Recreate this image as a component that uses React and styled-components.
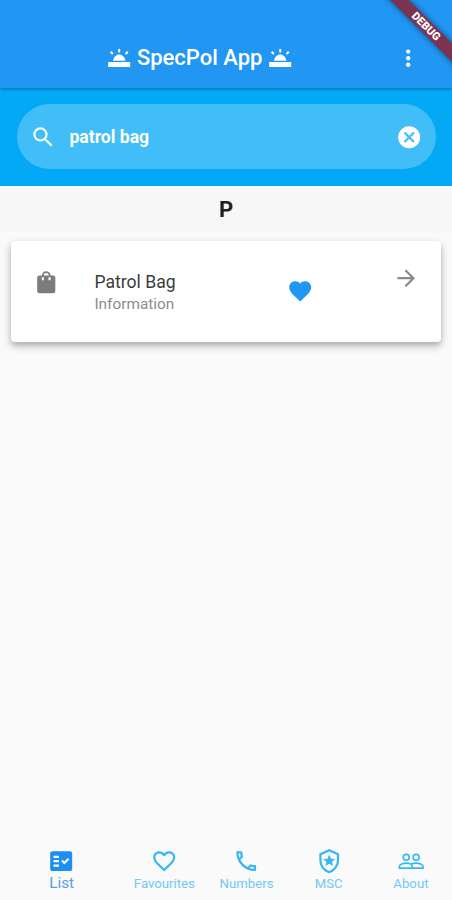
import styled, { createGlobalStyle } from "styled-components"
import {
    MdMoreVert,
    MdSearch,
    MdCancel,
    MdArrowForward,
    MdFavorite,
    MdFavoriteBorder,
    MdFactCheck,
    MdOutlineCall,
    MdOutlineLocalPolice,
} from "react-icons/md"

const GlobalStyle = createGlobalStyle`
    * {
        box-sizing: border-box;
    }

    body {
        margin: 0;
        font-family: Roboto, "Liberation Sans", sans-serif;
        background-color: #FAFAFA;
    }
`

const Screen = styled.div`
    background-color: #FAFAFA;
    display: flex;
    flex-direction: column;
    height: 900px;
    overflow: hidden;
    position: relative;
    width: 452px;
`

const AppBar = styled.header`
    align-items: center;
    background-color: #2196F3;
    box-shadow: 0 1px 3px rgba(0, 0, 0, 0.35);
    color: #FFF;
    display: flex;
    flex-shrink: 0;
    height: 88px;
    padding: 28px 31px 0 105.5px;
    position: relative;
    z-index: 1;
`

const Title = styled.h1`
    align-items: center;
    display: flex;
    flex: 1;
    font-size: 22px;
    font-weight: 500;
    gap: 5px;
    line-height: 26px;
    margin: 0;
    white-space: nowrap;
`

const MenuButton = styled.button`
    background: none;
    border: none;
    color: inherit;
    display: flex;
    padding: 0;
`

const SearchArea = styled.div`
    background-color: #03A9F4;
    flex-shrink: 0;
    height: 98px;
    padding: 16px 16px 17px 17px;
`

const SearchBox = styled.div`
    align-items: center;
    background-color: #41BEF8;
    border-radius: 33px;
    color: #FFF;
    display: flex;
    height: 65px;
    padding: 1px 14px 0 13px;
`

const SearchText = styled.span`
    flex: 1;
    font-size: 17.6px;
    font-weight: 700;
    line-height: 22px;
    margin: 0 0 1px 13px;
`

const Letter = styled.h2`
    background-color: #F7F7F7;
    color: #212121;
    flex-shrink: 0;
    font-size: 22px;
    font-weight: 700;
    height: 45px;
    line-height: 47px;
    margin: 0;
    text-align: center;
`

const Card = styled.article`
    background-color: #FFF;
    border-radius: 4px;
    box-shadow: 0 4px 10px rgba(0, 0, 0, 0.22), 0 3px 5px rgba(0, 0, 0, 0.14);
    display: flex;
    flex-shrink: 0;
    height: 101px;
    margin: 10px 11px 0;
    padding: 24px 22px 0;
`

const CardIcon = styled.span`
    color: ${(props) => props.$color};
    display: flex;
    height: 27px;
    margin-top: ${(props) => props.$top || "0"};
`

const CardText = styled.div`
    flex: 1;
    margin-left: 35px;
`

const CardTitle = styled.h3`
    color: #3C3C3C;
    font-size: 17.6px;
    font-weight: 400;
    line-height: 22px;
    margin: 6px 0 0;
`

const CardSubtitle = styled.p`
    color: #8C8C8C;
    font-size: 15.4px;
    line-height: 18px;
    margin: 2px 0 0;
`

const HeartSlot = styled.div`
    width: 105.4px;
`

const NavBar = styled.nav`
    background-color: #FAFAFA;
    border-top: 1px solid #F7F7F7;
    display: flex;
    flex-shrink: 0;
    height: 63px;
    margin-top: auto;
`

const NavItem = styled.a`
    align-items: center;
    color: ${(props) => (props.$active ? "#1C8FF0" : "#36B8F6")};
    display: flex;
    flex: ${(props) => (props.$active ? 1.5 : 1)} 1 0;
    flex-direction: column;
    padding-top: 10px;
`

const NavLabel = styled.span`
    color: ${(props) => (props.$active ? "#5A9EE8" : "#73C8F5")};
    font-size: ${(props) => (props.$active ? "15.4px" : "13.2px")};
    line-height: 18px;
    margin-top: ${(props) => (props.$active ? "0" : "1px")};
`

const BannerCorner = styled.div`
    height: 80px;
    overflow: hidden;
    pointer-events: none;
    position: absolute;
    right: 0;
    top: 0;
    width: 80px;
    z-index: 2;
`

const Banner = styled.div`
    background-color: #7C3350;
    box-shadow: 0 0 6px rgba(0, 0, 0, 0.5);
    color: #FFF;
    font-size: 11px;
    font-weight: 900;
    height: 13px;
    line-height: 13px;
    position: absolute;
    right: -34px;
    text-align: center;
    top: 20px;
    transform: rotate(45deg);
    width: 120px;
`

const ICON = 26.4

const tabs = [
    { label: "List", Icon: MdFactCheck, active: true },
    { label: "Favourites", Icon: MdFavoriteBorder },
    { label: "Numbers", Icon: MdOutlineCall },
    { label: "MSC", Icon: MdOutlineLocalPolice },
    { label: "About", Icon: PeopleIcon },
]

// rising light on a solid base, used on both sides of the title
function BeaconIcon() {
    return (
        <svg width={ICON} height={ICON} viewBox="0 0 24 24" fill="currentColor">
            <path d="M2 15.5h20V20H2z" />
            <path d="M6.3 14.4C7 10.8 9.3 8.6 12 8.6s5 2.2 5.700 5.800z" />
            <path d="M11.1 3.600h1.800v3.200h-1.800z" />
            <path
                d="M4.200 6.200l2 2M19.800 6.200l-2 2"
                stroke="currentColor"
                strokeWidth="1.8"
            />
        </svg>
    )
}

function BagIcon() {
    return (
        <svg width={ICON} height={ICON} viewBox="0 0 24 24" fill="currentColor">
            <path
                fillRule="evenodd"
                d="M18.5 6H16a4 4 0 0 0-8 0H5.5A2 2 0 0 0 3.8 8v12c0 1.1.8 2 1.9 2h12.6a2 2 0 0 0 2-2V8c0-1.1-.8-2-1.8-2zM12 3.7A2.3 2.3 0 0 1 14.3 6H9.7A2.3 2.3 0 0 1 12 3.7zM8 7.5h1.9v2.8H8zM14.1 7.5H16v2.8h-1.9z"
            />
        </svg>
    )
}

function PeopleIcon({ size }) {
    return (
        <svg
            width={size}
            height={size}
            viewBox="0 0 24 24"
            fill="none"
            stroke="currentColor"
            strokeWidth="1.5"
        >
            <circle cx="7.5" cy="8.5" r="2.75" />
            <circle cx="16.5" cy="8.5" r="2.75" />
            <path d="M1.25 18.25v-1.5c0-1.8 3.5-3 6.25-3s5.5 1.2 5.5 3v1.5zM12.2 14.5c1.2-.5 2.8-.75 4.3-.75 2.75 0 6.25 1.2 6.25 3v1.5H13" />
        </svg>
    )
}

function App() {
    return (
        <>
            <GlobalStyle />
            <Screen>
                <AppBar>
                    <Title>
                        <BeaconIcon />
                        SpecPol App
                        <BeaconIcon />
                    </Title>
                    <MenuButton aria-label="Menu">
                        <MdMoreVert size={ICON} />
                    </MenuButton>
                </AppBar>
                <SearchArea>
                    <SearchBox>
                        <MdSearch size={ICON} />
                        <SearchText>patrol bag</SearchText>
                        <MdCancel size={ICON} />
                    </SearchBox>
                </SearchArea>
                <Letter>P</Letter>
                <Card>
                    <CardIcon $color="#7C7C7C" $top="4px">
                        <BagIcon />
                    </CardIcon>
                    <CardText>
                        <CardTitle>Patrol Bag</CardTitle>
                        <CardSubtitle>Information</CardSubtitle>
                    </CardText>
                    <HeartSlot>
                        <CardIcon $color="#2196F3" $top="13px">
                            <MdFavorite size={ICON} />
                        </CardIcon>
                    </HeartSlot>
                    <CardIcon $color="#8A8A8A">
                        <MdArrowForward size={ICON} />
                    </CardIcon>
                </Card>
                <NavBar>
                    {tabs.map(({ label, Icon, active }) => (
                        <NavItem key={label} $active={active}>
                            <Icon size={ICON} />
                            <NavLabel $active={active}>{label}</NavLabel>
                        </NavItem>
                    ))}
                </NavBar>
                <BannerCorner>
                    <Banner>DEBUG</Banner>
                </BannerCorner>
            </Screen>
        </>
    )
}

export default App
